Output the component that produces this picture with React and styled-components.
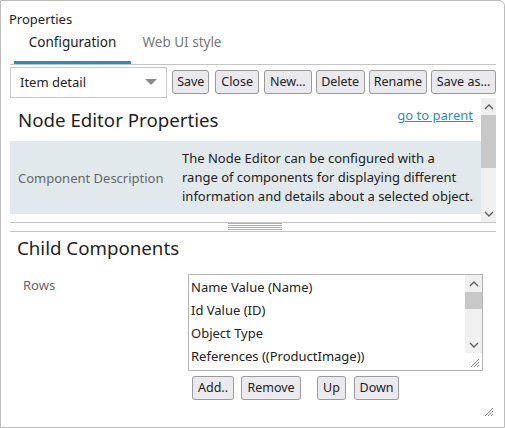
import React from 'react';
import styled, { createGlobalStyle } from 'styled-components';

const GlobalStyle = createGlobalStyle`
  html, body {
    margin: 0;
    padding: 0;
    background: #ffffff;
  }
  * {
    box-sizing: border-box;
  }
  body {
    font-family: "Noto Sans", "Open Sans", sans-serif;
    font-size: 13px;
    color: #222;
  }
`;

const Panel = styled.div`
  width: 505px;
  height: 428px;
  border: 1px solid #bcbcbc;
  border-radius: 0 6px 0 0;
  padding: 0 8px 0 8px;
  position: relative;
  display: flex;
  flex-direction: column;
  overflow: hidden;
`;

const Title = styled.div`
  height: 30px;
  padding-top: 9px;
  line-height: 18px;
  font-size: 13px;
  color: #222;
`;

const TabBar = styled.div`
  display: flex;
  height: 34px;
  margin-left: 1px;
  border-bottom: 1px solid #c4c4c4;
`;

const Tab = styled.div`
  width: ${({ w }) => w}px;
  margin-left: ${({ ml }) => ml || 0}px;
  text-align: center;
  font-size: 13.5px;
  line-height: 22px;
  color: ${({ active }) => (active ? '#222' : '#777')};
  border-bottom: 3px solid ${({ active }) => (active ? '#1e8fd4' : 'transparent')};
`;

const Toolbar = styled.div`
  display: flex;
  align-items: center;
  height: 33px;
  margin-left: 1px;
  padding-top: 1px;
`;

const Select = styled.div`
  width: 158px;
  height: 31px;
  border: 1px solid #c8c8c8;
  background: #fff;
  display: flex;
  align-items: center;
  justify-content: space-between;
  padding: 0 9px 0 9px;
  margin-right: 5px;
  font-size: 13px;
`;

const Caret = styled.span`
  width: 0;
  height: 0;
  border-left: 6px solid transparent;
  border-right: 6px solid transparent;
  border-top: 6px solid #8a8a8a;
`;

const Button = styled.button`
  width: ${({ w }) => w}px;
  height: 24px;
  padding: 0;
  margin-right: ${({ mr }) => (mr === undefined ? 5 : mr)}px;
  border: 1px solid #9a9a9a;
  border-radius: 3px;
  background: #e9e9ee;
  font-family: inherit;
  font-size: 12.5px;
  color: #222;
  line-height: 20px;
  white-space: nowrap;
`;

const ScrollArea = styled.div`
  display: flex;
  height: 124px;
  margin-left: 1px;
`;

const ScrollContent = styled.div`
  flex: 1;
  display: flex;
  flex-direction: column;
`;

const HeadingRow = styled.div`
  display: flex;
  justify-content: space-between;
  align-items: flex-start;
  height: 43px;
  padding: 8px 8px 0 8px;
`;

const Heading = styled.div`
  font-size: 18.7px;
  line-height: 28px;
  color: #1f1f1f;
`;

const Link = styled.a`
  color: #1e8fd4;
  text-decoration: underline;
  font-size: 13px;
  line-height: 18px;
  cursor: pointer;
`;

const DescRow = styled.div`
  display: grid;
  grid-template-columns: 172px 1fr;
  align-items: center;
  background: #e1e9ec;
  height: 73px;
`;

const DescLabel = styled.div`
  padding-left: 8px;
  color: #666;
  font-size: 13px;
`;

const DescText = styled.div`
  font-size: 13px;
  line-height: 19px;
  color: #222;
`;

const Scrollbar = styled.div`
  width: ${({ w }) => w}px;
  background: #f0f0f0;
  display: flex;
  flex-direction: column;
  align-items: center;
  height: ${({ h }) => (h ? `${h}px` : 'auto')};
`;

const ArrowBox = styled.div`
  height: ${({ h }) => h}px;
  width: 100%;
  display: flex;
  align-items: center;
  justify-content: center;
`;

const Thumb = styled.div`
  width: 100%;
  height: ${({ h }) => h}px;
  background: #c8c8c8;
`;

const Spacer = styled.div`
  flex: 1;
`;

const Splitter = styled.div`
  height: 10px;
  margin-left: 1px;
  border-top: 1px solid #c4c4c4;
  border-bottom: 1px solid #c4c4c4;
  display: flex;
  justify-content: center;
`;

const Grip = styled.div`
  width: 54px;
  margin-left: 4px;
  height: 8px;
  background: repeating-linear-gradient(
    to bottom,
    #b0b0b0 0px,
    #b0b0b0 1px,
    transparent 1px,
    transparent 2px
  );
`;

const Section = styled.div`
  padding: 2px 0 0 8px;
`;

const FieldRow = styled.div`
  display: grid;
  grid-template-columns: 171px 295px;
  margin-top: 12px;
`;

const FieldLabel = styled.div`
  padding-left: 6px;
  padding-top: 2px;
  color: #666;
  font-size: 13px;
`;

const ListBox = styled.div`
  height: 97px;
  border: 1px solid #b4b4b4;
  display: flex;
  position: relative;
`;

const ListItems = styled.div`
  flex: 1;
  padding: 1px 0 0 2px;
`;

const ListItem = styled.div`
  line-height: 23px;
  font-size: 13px;
  white-space: nowrap;
`;

const ListButtons = styled.div`
  display: flex;
  margin-top: 5px;
  margin-left: 175px;
`;

const ResizeGrip = styled.svg`
  position: absolute;
  right: ${({ r }) => r}px;
  bottom: ${({ b }) => b}px;
`;

const Chevron = ({ down }) => (
  <svg width="10" height="6" viewBox="0 0 10 6">
    <path
      d={down ? 'M1 1 L5 5 L9 1' : 'M1 5 L5 1 L9 5'}
      fill="none"
      stroke="#606060"
      strokeWidth="1.4"
    />
  </svg>
);

const GripIcon = () => (
  <>
    <path d="M10 2 L2 10" stroke="#8a8a8a" strokeWidth="1" />
    <path d="M10 5 L5 10" stroke="#8a8a8a" strokeWidth="1" />
    <path d="M10 8 L8 10" stroke="#8a8a8a" strokeWidth="1" />
  </>
);

export default function App() {
  return (
    <>
      <GlobalStyle />
      <Panel>
        <Title>Properties</Title>
        <TabBar>
          <Tab active w={117} ml={4}>Configuration</Tab>
          <Tab w={94} ml={4}>Web UI style</Tab>
        </TabBar>
        <Toolbar>
          <Select>
            <span>Item detail</span>
            <Caret />
          </Select>
          <Button w={37} mr={6}>Save</Button>
          <Button w={44}>Close</Button>
          <Button w={48} mr={4}>New...</Button>
          <Button w={49} mr={4}>Delete</Button>
          <Button w={59} mr={4}>Rename</Button>
          <Button w={65} mr={0}>Save as...</Button>
        </Toolbar>
        <ScrollArea>
          <ScrollContent>
            <HeadingRow>
              <Heading>Node Editor Properties</Heading>
              <Link>go to parent</Link>
            </HeadingRow>
            <DescRow>
              <DescLabel>Component Description</DescLabel>
              <DescText>
                The Node Editor can be configured with a
                <br />
                range of components for displaying different
                <br />
                information and details about a selected object.
              </DescText>
            </DescRow>
          </ScrollContent>
          <Scrollbar w={15}>
            <ArrowBox h={17}><Chevron /></ArrowBox>
            <Thumb h={53} />
            <Spacer />
            <ArrowBox h={17}><Chevron down /></ArrowBox>
          </Scrollbar>
        </ScrollArea>
        <Splitter>
          <Grip />
        </Splitter>
        <Section>
          <Heading>Child Components</Heading>
          <FieldRow>
            <FieldLabel>Rows</FieldLabel>
            <ListBox>
              <ListItems>
                <ListItem>Name Value (Name)</ListItem>
                <ListItem>Id Value (ID)</ListItem>
                <ListItem>Object Type</ListItem>
                <ListItem>References ((ProductImage))</ListItem>
              </ListItems>
              <Scrollbar w={17} h={78}>
                <ArrowBox h={17}><Chevron /></ArrowBox>
                <Thumb h={17} />
                <Spacer />
                <ArrowBox h={17}><Chevron down /></ArrowBox>
              </Scrollbar>
              <ResizeGrip r={1} b={1} width="12" height="12" viewBox="0 0 12 12">
                <GripIcon />
              </ResizeGrip>
            </ListBox>
          </FieldRow>
          <ListButtons>
            <Button w={42} mr={7}>Add..</Button>
            <Button w={60} mr={16}>Remove</Button>
            <Button w={29} mr={8}>Up</Button>
            <Button w={45}>Down</Button>
          </ListButtons>
        </Section>
        <ResizeGrip r={9} b={9} width="12" height="12" viewBox="0 0 12 12">
          <GripIcon />
        </ResizeGrip>
      </Panel>
    </>
  );
}
